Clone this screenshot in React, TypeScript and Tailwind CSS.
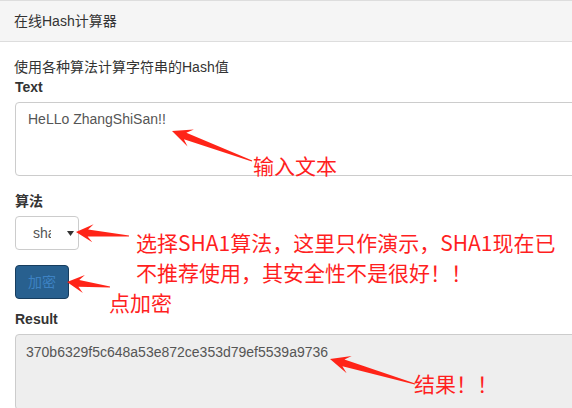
import React from "react";

type Pt = [number, number];

// polygon for a tapering screenshot-style arrow, from tail to tip
function arrowPoints(tail: Pt, tip: Pt, headLen = 20, headHalf = 9, shaft = 3.5): string {
    const dx = tip[0] - tail[0];
    const dy = tip[1] - tail[1];
    const len = Math.hypot(dx, dy);
    const ux = dx / len;
    const uy = dy / len;
    const nx = -uy;
    const ny = ux;
    const at = (back: number, side: number): Pt => [tip[0] - ux * back + nx * side, tip[1] - uy * back + ny * side];
    const pts: Pt[] = [
        [tail[0] + nx * 0.6, tail[1] + ny * 0.6],
        at(headLen * 0.7, shaft),
        at(headLen, headHalf),
        tip,
        at(headLen, -headHalf),
        at(headLen * 0.7, -shaft),
        [tail[0] - nx * 0.6, tail[1] - ny * 0.6],
    ];
    return pts.map((p) => p.join(",")).join(" ");
}

const arrows: { tail: Pt; tip: Pt; head?: number; half?: number }[] = [
    { tail: [252, 161], tip: [172, 131] },
    { tail: [129, 236], tip: [76, 232], head: 17, half: 9 },
    { tail: [110, 287], tip: [67, 282], head: 17, half: 9 },
    { tail: [415, 384], tip: [330, 359] },
];

const note = "absolute text-[21px] leading-[30px] text-[#ff1f1f] whitespace-nowrap";

export default function App() {
    return (
        <div
            className="relative w-[572px] h-[408px] overflow-hidden bg-white text-[14px] leading-5 text-[#333]"
            style={{ fontFamily: '"Liberation Sans", "Noto Sans CJK SC", sans-serif' }}
        >
            <div className="w-[640px]">
                <div className="border-y border-[#ddd] bg-[#f5f5f5] px-[14px] py-[10px]">在线Hash计算器</div>
                <div className="px-[15px] pt-[15px]">
                    <p className="-ml-px">使用各种算法计算字符串的Hash值</p>
                    <p className="font-bold">Text</p>
                    <div className="mt-[5px] h-[74px] rounded border border-[#ccc] px-3 py-[6px] text-[#555]">
                        HeLLo ZhangShiSan!!
                    </div>

                    <p className="mt-[15px] font-bold">算法</p>
                    <div className="mt-[5px] flex h-[34px] w-[64px] items-center rounded border border-[#ccc] pl-[17px] text-[#555]">
                        <span className="w-[18px] overflow-hidden whitespace-nowrap">sha1</span>
                        <svg className="ml-[16px]" width="7" height="5" viewBox="0 0 7 5">
                            <polygon points="0,0 7,0 3.5,5" fill="#333" />
                        </svg>
                    </div>

                    <button className="mt-[15px] block h-[34px] w-[54px] rounded border border-[#173d5e] bg-[#28608f] text-[#3d82c3]">
                        加密
                    </button>

                    <p className="mt-[10px] font-bold">Result</p>
                    <div className="mt-[5px] h-[76px] rounded border border-[#ccc] bg-[#eee] px-[10px] py-[7px] text-[#555]">
                        370b6329f5c648a53e872ce353d79ef5539a9736
                    </div>
                </div>
            </div>

            <svg className="pointer-events-none absolute inset-0" width="572" height="408">
                {arrows.map((a, i) => (
                    <polygon key={i} points={arrowPoints(a.tail, a.tip, a.head, a.half)} fill="#ff2418" />
                ))}
            </svg>

            <div
                className="pointer-events-none absolute inset-0"
                style={{ fontFamily: '"Noto Sans CJK SC", sans-serif' }}
            >
                <span className={note + " left-[253px] top-[150px]"}>输入文本</span>
                <div className={note + " left-[136px] top-[227px]"}>
                    选择SHA1算法，这里只作演示，SHA1现在已
                    <br />
                    不推荐使用，其安全性不是很好！！
                </div>
                <span className={note + " left-[109px] top-[287px]"}>点加密</span>
                <span className={note + " left-[414px] top-[368px]"}>结果！！</span>
            </div>
        </div>
    );
}
